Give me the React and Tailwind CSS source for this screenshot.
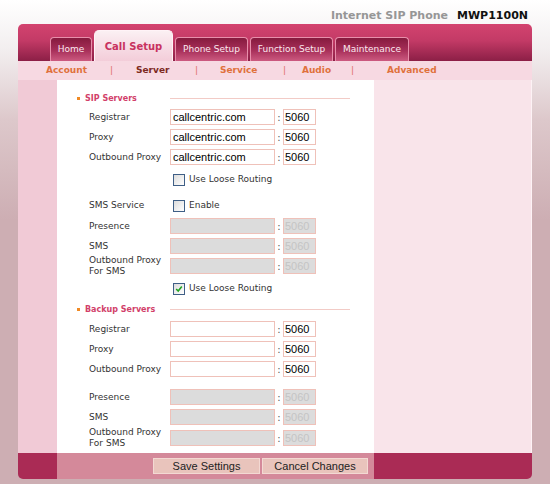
import React from "react";

const dv = "font-['DejaVu_Sans',Verdana,sans-serif]";
const ar = "font-['Liberation_Sans',Arial,sans-serif]";

function Check({ checked }) {
  return (
    <span className="relative inline-block w-[12px] h-[12px] border border-[#3f5f86] bg-[linear-gradient(135deg,#dcdcdc,#ffffff)] shrink-0">
      {checked && (
        <svg viewBox="0 0 10 10" className="absolute left-[1px] top-[1px] w-[8px] h-[8px]">
          <path d="M1.5 5 L4 7.5 L8.5 2" fill="none" stroke="#21a321" strokeWidth="2" />
        </svg>
      )}
    </span>
  );
}

function Field({ label, value = "", disabled = false, two = false }) {
  return (
    <div className="flex items-center h-[20px]">
      <div className={`w-[113px] pl-[32px] text-[9px] text-[#333] ${dv} ${two ? "leading-[11px]" : "leading-[12px]"}`}>
        {two ? (
          <>
            Outbound Proxy
            <br />
            For SMS
          </>
        ) : (
          label
        )}
      </div>
      <div
        className={`w-[105px] h-[16px] border border-[#efc1b9] ${disabled ? "bg-[#dcdcdc]" : "bg-white"} ${ar} text-[11px] leading-[14px] pl-[2px] text-black`}
      >
        {value}
      </div>
      <div className={`w-[8px] text-center text-[10px] text-[#555] ${dv}`}>:</div>
      <div
        className={`w-[33px] h-[16px] border border-[#efc1b9] ${disabled ? "bg-[#dcdcdc] text-[#c4c4c4]" : "bg-white text-black"} ${ar} text-[11px] leading-[14px] pl-[1px]`}
      >
        5060
      </div>
    </div>
  );
}

function Section({ title, className = "" }) {
  return (
    <div className={`flex items-center h-[17px] ${className}`}>
      <div className="w-[113px] flex items-center pl-[20px]">
        <span className="w-[3px] h-[3px] bg-[#f08a24]" />
        <span className={`ml-[5px] text-[8px] font-bold text-[#d23f6a] ${dv}`}>{title}</span>
      </div>
      <div className="w-[180px] h-px bg-[#f2cbc6]" />
    </div>
  );
}

function CheckRow({ checked, text, className = "" }) {
  return (
    <div className={`flex items-center h-[20px] pl-[116px] ${className}`}>
      <Check checked={checked} />
      <span className={`ml-[4px] text-[9px] text-[#333] ${dv}`}>{text}</span>
    </div>
  );
}

function Tab({ label, w }) {
  return (
    <div
      className={`${w} h-[24px] rounded-t-[4px] border border-b-0 border-[#e88fab] bg-[linear-gradient(to_bottom,#861a3e,#a8305a_55%,#cc5a80)] flex items-center justify-center text-[9px] text-[#fbe9ef] ${dv}`}
    >
      {label}
    </div>
  );
}

export default function App() {
  const sub = `text-[9px] font-bold ${dv}`;
  return (
    <div className="w-[550px] h-[484px] overflow-hidden bg-[linear-gradient(to_bottom,#ffffff_0px,#f2eeef_50px,#ddc8cb_120px,#cdaeb3_220px,#cdaeb3_100%)]">
      {/* header */}
      <div className="h-[24px] flex justify-end pr-[22px] pt-[9px]">
        <div className={`flex gap-[9px] text-[11px] leading-[14px] font-bold ${dv}`}>
          <span className="text-[#969696]">Internet SIP Phone</span>
          <span className="text-[#111]">MWP1100N</span>
        </div>
      </div>

      {/* panel */}
      <div className="ml-[18px] w-[514px] rounded-[5px] overflow-hidden">
        {/* tab bar */}
        <div className="h-[37px] flex items-end pl-[32px] gap-[2px] bg-[linear-gradient(to_bottom,#d3436f,#c33a66_45%,#8c1f46)]">
          <Tab label="Home" w="w-[42px]" />
          <div
            className={`w-[79px] h-[31px] rounded-t-[5px] border border-b-0 border-[#fff3f7] bg-[linear-gradient(to_bottom,#fbf0f3,#f6dae3_60%,#f3cdd9)] flex items-center justify-center text-[10px] font-bold text-[#c8325f] ${dv}`}
          >
            Call Setup
          </div>
          <Tab label="Phone Setup" w="w-[73px]" />
          <Tab label="Function Setup" w="w-[83px]" />
          <Tab label="Maintenance" w="w-[74px]" />
        </div>

        {/* sub nav */}
        <div className="h-[19px] bg-[#f7d9e2] grid grid-cols-[64px_26px_59px_25px_63px_19px_49px_36px_auto] items-center pl-[28px]">
          <span className={`${sub} text-[#e0713c]`}>Account</span>
          <span className={`${sub} font-normal text-[#e0716a]`}>|</span>
          <span className={`${sub} text-[#7d2a1f]`}>Server</span>
          <span className={`${sub} font-normal text-[#e0716a]`}>|</span>
          <span className={`${sub} text-[#e0713c]`}>Service</span>
          <span className={`${sub} font-normal text-[#e0716a]`}>|</span>
          <span className={`${sub} text-[#e0713c]`}>Audio</span>
          <span className={`${sub} font-normal text-[#e0716a]`}>|</span>
          <span className={`${sub} text-[#e0713c]`}>Advanced</span>
        </div>

        {/* body */}
        <div className="flex h-[373px]">
          <div className="w-[39px] bg-[#f1cad6]" />
          <div className="w-[317px] bg-white pt-[10px] flex flex-col">
            <Section title="SIP Servers" />
            <Field label="Registrar" value="callcentric.com" />
            <Field label="Proxy" value="callcentric.com" />
            <Field label="Outbound Proxy" value="callcentric.com" />
            <CheckRow checked={false} text="Use Loose Routing" className="mt-[3px]" />

            <div className="flex items-center h-[20px] mt-[6px]">
              <div className={`w-[116px] pl-[32px] text-[9px] text-[#333] ${dv}`}>SMS Service</div>
              <Check checked={false} />
              <span className={`ml-[4px] text-[9px] text-[#333] ${dv}`}>Enable</span>
            </div>
            <Field label="Presence" disabled />
            <Field label="SMS" disabled />
            <Field two disabled />
            <CheckRow checked text="Use Loose Routing" className="mt-[3px]" />

            <Section title="Backup Servers" className="mt-[2px]" />
            <div className="mt-[1px]" />
            <Field label="Registrar" />
            <Field label="Proxy" />
            <Field label="Outbound Proxy" />
            <div className="mt-[8px]" />
            <Field label="Presence" disabled />
            <Field label="SMS" disabled />
            <div className="mt-[1px]" />
            <Field two disabled />
          </div>
          <div className="flex-1 bg-[#f9e4ea] border-r border-[#fdf2f5]" />
        </div>

        {/* bottom bar */}
        <div className="flex h-[26px]">
          <div className="w-[39px] bg-[#aa2b55]" />
          <div className="w-[317px] bg-[#d4899a] flex items-center pl-[96px] gap-[2px]">
            <div className={`w-[107px] h-[16px] bg-[#e9c4bc] border border-[#f3d9d3] flex items-center justify-center text-[11px] text-[#222] ${ar}`}>
              Save Settings
            </div>
            <div className={`w-[106px] h-[16px] bg-[#e9c4bc] border border-[#f3d9d3] flex items-center justify-center text-[11px] text-[#222] ${ar}`}>
              Cancel Changes
            </div>
          </div>
          <div className="flex-1 bg-[#aa2b55]" />
        </div>
      </div>
    </div>
  );
}
